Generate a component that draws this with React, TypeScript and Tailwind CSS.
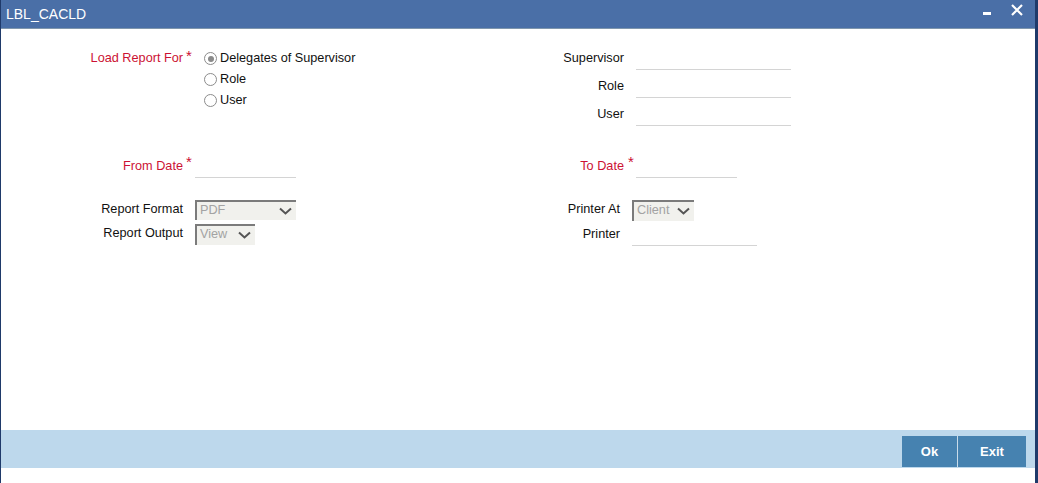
import React from "react";

const RED = "text-[#cc1133]";

function Radio({ checked, label }: { checked?: boolean; label: string }) {
  return (
    <label className="flex items-center h-[21px]">
      <span className="ml-[9px] w-[13px] h-[13px] rounded-full border border-[#8c8c8c] bg-white flex items-center justify-center">
        {checked && <span className="w-[6px] h-[6px] rounded-full bg-[#8a8a8a]" />}
      </span>
      <span className="ml-[3px] text-[#111]">{label}</span>
    </label>
  );
}

function Line({ w }: { w: string }) {
  return <div className={`${w} h-[22px] border-b border-[#d4d4d4]`} />;
}

function Select({ value, w, h }: { value: string; w: string; h: string }) {
  return (
    <div className={`${w} ${h} flex items-center justify-between bg-[#f1f1ed] border-t-2 border-l-2 border-[#7b7b7b] pl-[3px] pr-[4px] text-[#a3a3a3]`}>
      <span>{value}</span>
      <svg width="13" height="8" viewBox="0 0 13 8">
        <path d="M1 1.5 L6.5 6.5 L12 1.5" fill="none" stroke="#555" strokeWidth="2" />
      </svg>
    </div>
  );
}

function Star() {
  return <span className={`${RED} text-[15px] leading-none relative top-[-3px]`}>*</span>;
}

export default function App() {
  return (
    <div
      className="w-[1038px] h-[483px] bg-white flex flex-col border-r-[3px] border-l border-[#1f3a6a] text-[12.7px]"
      style={{ fontFamily: '"Liberation Sans", Arial, sans-serif' }}
    >
      {/* title bar */}
      <div className="h-[29px] shrink-0 bg-[#4a6fa7] border-b border-[#7f96ad] flex items-center justify-between pl-[5px] pr-[12px] text-white">
        <span className="text-[14px]">LBL_CACLD</span>
        <div className="flex items-center gap-[20px]">
          <span className="w-[8px] h-[3px] bg-white mt-[-2px]" />
          <svg width="12" height="12" viewBox="0 0 12 12" className="mt-[-8px]">
            <path d="M1 1 L11 11 M11 1 L1 11" stroke="white" strokeWidth="2.2" />
          </svg>
        </div>
      </div>

      {/* body */}
      <div className="flex-1 flex flex-col pt-[16px]">
        {/* top section */}
        <div className="flex">
          <div className="w-[438px] flex pt-[3px]">
            <div className="w-[182px] text-right h-[21px] leading-[21px]">
              <span className={RED}>Load Report For</span>
            </div>
            <div className="w-[12px] pl-[3px] h-[21px] flex items-center"><Star /></div>
            <div className="flex flex-col">
              <Radio checked label="Delegates of Supervisor" />
              <Radio label="Role" />
              <Radio label="User" />
            </div>
          </div>
          <div className="flex flex-col">
            {["Supervisor", "Role", "User"].map((l) => (
              <div key={l} className="flex items-center h-[28px]">
                <div className="w-[185px] text-right text-[#111]">{l}</div>
                <div className="w-[12px]" />
                <Line w="w-[155px]" />
              </div>
            ))}
          </div>
        </div>

        {/* dates */}
        <div className="flex mt-[24px]">
          <div className="w-[438px] flex items-center h-[28px]">
            <div className={`w-[182px] text-right ${RED}`}>From Date</div>
            <div className="w-[12px] pl-[3px]"><Star /></div>
            <Line w="w-[101px]" />
          </div>
          <div className="flex items-center h-[28px]">
            <div className={`w-[185px] text-right ${RED}`}>To Date</div>
            <div className="w-[12px] pl-[4px]"><Star /></div>
            <Line w="w-[101px]" />
          </div>
        </div>

        {/* formats */}
        <div className="flex mt-[17px]">
          <div className="w-[438px] flex flex-col">
            <div className="flex items-center h-[24px]">
              <div className="w-[182px] text-right text-[#111]">Report Format</div>
              <div className="w-[12px]" />
              <Select value="PDF" w="w-[101px]" h="h-[20px]" />
            </div>
            <div className="flex items-center h-[24px]">
              <div className="w-[182px] text-right text-[#111]">Report Output</div>
              <div className="w-[12px]" />
              <Select value="View" w="w-[60px]" h="h-[21px]" />
            </div>
          </div>
          <div className="flex flex-col">
            <div className="flex items-center h-[24px]">
              <div className="w-[181px] text-right text-[#111]">Printer At</div>
              <div className="w-[12px]" />
              <Select value="Client" w="w-[62px]" h="h-[21px]" />
            </div>
            <div className="flex items-center h-[24px] mt-[1px]">
              <div className="w-[181px] text-right text-[#111]">Printer</div>
              <div className="w-[12px]" />
              <Line w="w-[125px]" />
            </div>
          </div>
        </div>
      </div>

      {/* footer */}
      <div className="h-[38px] shrink-0 bg-[#bdd8ec] flex justify-end items-start pt-[6px] pr-[9px]">
        <button className="w-[56px] h-[31px] bg-[#4682b0] text-white font-bold text-[13px] border-r border-[#c9dcea]">Ok</button>
        <button className="w-[68px] h-[31px] bg-[#4682b0] text-white font-bold text-[13px]">Exit</button>
      </div>
      <div className="h-[15px] shrink-0 bg-white" />
    </div>
  );
}
